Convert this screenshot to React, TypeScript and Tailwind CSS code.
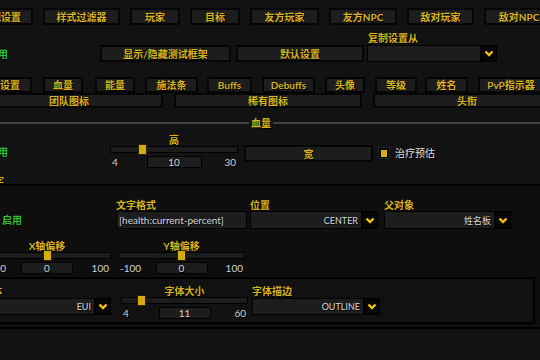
import React from "react";

const gold = "text-[#d8b31c]";

function Btn({ label, className = "" }: { label: string; className?: string }) {
  return (
    <div
      className={`flex shrink-0 items-center justify-center border-2 border-[#050505] bg-[#1d1d1d] font-bold ${gold} ${className}`}
    >
      {label}
    </div>
  );
}

function Chevron() {
  return (
    <svg width="10" height="7" viewBox="0 0 10 7">
      <path d="M1.5 1.5 L5 5 L8.5 1.5" fill="none" stroke="#f2c400" strokeWidth="2.4" />
    </svg>
  );
}

function Dropdown({ text, className = "" }: { text: string; className?: string }) {
  return (
    <div className={`flex gap-[2px] bg-black p-[1px] ${className}`}>
      <div className="flex flex-1 items-center justify-end bg-[#1d1d1d] pr-[3px] text-[9px] text-[#d8d8d8]">
        {text}
      </div>
      <div className="flex w-[14px] items-center justify-center bg-[#060606]">
        <Chevron />
      </div>
    </div>
  );
}

function Slider({
  label,
  min,
  max,
  value,
  className = "",
  boxW = "w-[52px]",
}: {
  label: string;
  min: number;
  max: number;
  value: number;
  className?: string;
  boxW?: string;
}) {
  const pct = (value - min) / (max - min);
  return (
    <div className={`flex shrink-0 flex-col ${className}`}>
      <div className={`h-[11px] text-center font-bold ${gold}`}>{label}</div>
      <div className="relative h-[7px] border border-black bg-[#1c1c1c]">
        <div
          className="absolute top-[-3px] h-[11px] w-[9px] border border-[#2a2200] bg-[#d4ad0c]"
          style={{ left: `calc(${pct} * (100% - 9px))` }}
        />
      </div>
      <div className="mt-[3px] grid h-[10px] grid-cols-[1fr_auto_1fr] items-center px-[2px] text-[#d4d4d4]">
        <span>{min}</span>
        <div className={`flex h-full items-center justify-center border border-black bg-[#1d1d1d] ${boxW}`}>
          {value}
        </div>
        <span className="text-right">{max}</span>
      </div>
    </div>
  );
}

const topTabs = [
  ["常规设置", "w-[64px]"],
  ["样式过滤器", "w-[77px]"],
  ["玩家", "w-[50px]"],
  ["目标", "w-[50px]"],
  ["友方玩家", "w-[69px]"],
  ["友方NPC", "w-[68px]"],
  ["敌对玩家", "w-[67px]"],
  ["敌对NPC", "w-[70px]"],
];

const subTabs = [
  ["常规设置", "w-[64px]"],
  ["血量", "w-[40px] ml-[11px]"],
  ["能量", "w-[40px] ml-[12px]"],
  ["施法条", "w-[53px] ml-[10px]"],
  ["Buffs", "w-[45px] ml-[9px]"],
  ["Debuffs", "w-[53px] ml-[10px]"],
  ["头像", "w-[40px] ml-[10px]"],
  ["等级", "w-[42px] ml-[10px]"],
  ["姓名", "w-[43px] ml-[8px]"],
  ["PvP指示器", "w-[66px] ml-[10px]"],
];

export default function App() {
  return (
    <div className="h-[360px] w-[540px] overflow-hidden bg-[#121212] font-['Lato','Noto_Sans_CJK_SC',sans-serif] text-[10px] leading-none [text-shadow:1px_1px_0_#000]">
      {/* top tabs */}
      <div className="ml-[-31px] mt-[8px] flex h-[17px] gap-[10px]">
        {topTabs.map(([l, c]) => (
          <Btn key={l} label={l} className={c} />
        ))}
      </div>

      {/* enable / test frame / defaults / copy from */}
      <div className="ml-[-12px] mt-[8px] flex items-end">
        <div className="flex h-[17px] w-[112px] shrink-0 items-center font-bold text-[#2fc12f]">启用</div>
        <Btn label="显示/隐藏测试框架" className="h-[17px] w-[131px]" />
        <Btn label="默认设置" className="ml-[5px] h-[17px] w-[128px]" />
        <div className="ml-[3px] flex w-[130px] shrink-0 flex-col">
          <div className={`h-[12px] pl-[1px] font-bold ${gold}`}>复制设置从</div>
          <Dropdown text="" className="h-[17px]" />
        </div>
      </div>

      {/* sub tabs */}
      <div className="ml-[-32px] mt-[15px] flex h-[16px]">
        {subTabs.map(([l, c]) => (
          <Btn key={l} label={l} className={c} />
        ))}
      </div>
      <div className="ml-[-25px] flex h-[15px] gap-[11px]">
        <Btn label="团队图标" className="w-[188px]" />
        <Btn label="稀有图标" className="w-[188px]" />
        <Btn label="头衔" className="w-[188px]" />
      </div>

      {/* section header */}
      <div className="mt-[9px] flex h-[12px] items-center">
        <div className="h-[2px] w-[249px] bg-[#424242]" />
        <span className={`px-[2px] font-bold ${gold}`}>血量</span>
        <div className="h-[2px] flex-1 bg-[#424242]" />
      </div>

      {/* height / width / heal prediction */}
      <div className="ml-[-12px] mt-[6px] flex items-start">
        <div className="w-[122px] shrink-0 pt-[12px] font-bold text-[#2fc12f]">启用</div>
        <Slider label="高" min={4} max={30} value={10} className="w-[128px]" boxW="w-[55px]" />
        <Btn label="宽" className="ml-[6px] mt-[10px] h-[17px] w-[129px]" />
        <div className="ml-[5px] mt-[12px] flex h-[12px] w-[12px] shrink-0 items-center justify-center border border-[#1e1e1e] bg-[#070707]">
          <div className="h-[7px] w-[6px] bg-[#d4ad0c]" />
        </div>
        <span className="ml-[5px] mt-[13px] text-[#e2e2e2]">治疗预估</span>
      </div>

      {/* text group */}
      <div className={`ml-[-16px] mt-[10px] h-[8px] font-bold ${gold}`}>文字</div>
      <div className="ml-[-30px] w-[600px] border-2 border-black bg-[#0e0e0e] pb-[3px] pl-[10px]">
        <div className="mt-[14px] flex items-end">
          <div className="flex h-[18px] w-[134px] shrink-0 items-center pl-[20px] font-bold text-[#2fc12f]">启用</div>
          <div className="flex w-[131px] shrink-0 flex-col">
            <div className={`h-[11px] font-bold ${gold}`}>文字格式</div>
            <div className="flex h-[18px] items-center border border-black bg-[#1d1d1d] pl-[2px] text-[#d6d6d6]">
              [health:current-percent]
            </div>
          </div>
          <div className="ml-[3px] flex w-[128px] shrink-0 flex-col">
            <div className={`h-[11px] font-bold ${gold}`}>位置</div>
            <Dropdown text="CENTER" className="h-[18px]" />
          </div>
          <div className="ml-[6px] flex w-[127px] shrink-0 flex-col">
            <div className={`h-[11px] font-bold ${gold}`}>父对象</div>
            <Dropdown text="姓名板" className="h-[18px]" />
          </div>
        </div>

        <div className="mt-[12px] flex">
          <Slider label="X轴偏移" min={-100} max={100} value={0} className="ml-[1px] w-[128px]" />
          <Slider label="Y轴偏移" min={-100} max={100} value={0} className="ml-[7px] w-[127px]" />
        </div>

        {/* font sub group */}
        <div className="ml-[-4px] mt-[5px] w-[557px] border-2 border-black bg-[#111111] pb-[5px] pl-[2px] pt-[7px]">
          <div className="flex items-start">
            <div className="flex w-[129px] shrink-0 flex-col">
              <div className={`h-[12px] font-bold ${gold}`}>字体</div>
              <Dropdown text="EUI" className="h-[17px]" />
            </div>
            <Slider label="字体大小" min={4} max={60} value={11} className="ml-[10px] w-[127px]" />
            <div className="ml-[4px] flex w-[128px] shrink-0 flex-col">
              <div className={`h-[12px] font-bold ${gold}`}>字体描边</div>
              <Dropdown text="OUTLINE" className="h-[17px]" />
            </div>
          </div>
        </div>
      </div>
    </div>
  );
}
